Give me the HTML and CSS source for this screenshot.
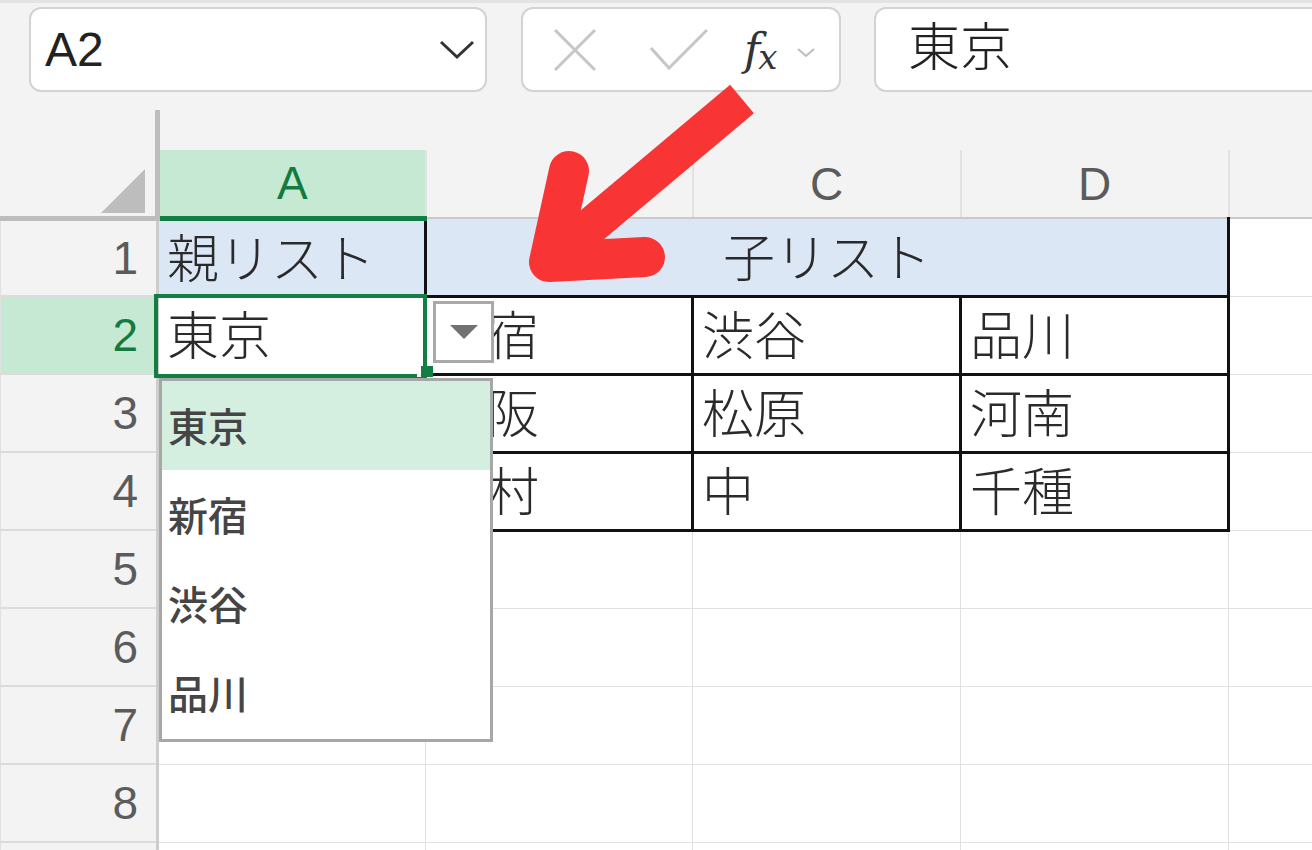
FILE: index.html
```html
<!DOCTYPE html>
<html lang="ja">
<head>
    <meta charset="UTF-8">
    <title>入力規則 - ドロップダウンリスト</title>
    <link rel="stylesheet" href="styles.css">
</head>
<body>
    <!-- Formula bar -->
    <div class="toolbar">
        <div class="name-box">
            <span class="name-text">A2</span>
            <svg class="name-chevron" width="36" height="20" viewBox="0 0 36 20">
                <path d="M2 2 L18 17 L34 2" fill="none" stroke="#333" stroke-width="3"/>
            </svg>
        </div>
        <div class="fx-buttons">
            <svg class="btn-cancel" width="44" height="44" viewBox="0 0 44 44">
                <path d="M2 2 L42 42 M42 2 L2 42" stroke="#c6c6c6" stroke-width="3"/>
            </svg>
            <svg class="btn-enter" width="58" height="44" viewBox="0 0 58 44">
                <path d="M1 20 L19 40 L57 2" fill="none" stroke="#c6c6c6" stroke-width="3"/>
            </svg>
            <span class="fx"><i>f</i><i class="fx-x">x</i></span>
            <svg class="fx-chevron" width="18" height="10" viewBox="0 0 18 10">
                <path d="M1 1 L9 8 L17 1" fill="none" stroke="#bdbdbd" stroke-width="2"/>
            </svg>
        </div>
        <div class="formula-input">東京</div>
    </div>

    <!-- Sheet grid -->
    <table class="sheet">
        <colgroup>
            <col class="c-rh">
            <col class="c-a">
            <col class="c-b">
            <col class="c-c">
            <col class="c-d">
            <col class="c-e">
        </colgroup>
        <tr class="gap-row">
            <td class="corner" rowspan="2">
                <svg width="44" height="44" viewBox="0 0 44 44"><path d="M44 0 L44 44 L0 44 Z" fill="#bdbdbd"/></svg>
            </td>
            <td class="gap" colspan="5"></td>
        </tr>
        <tr class="col-heads">
            <th class="active">A</th>
            <th></th>
            <th>C</th>
            <th>D</th>
            <th></th>
        </tr>
        <tr>
            <td class="rh">1</td>
            <td class="blue">親リスト</td>
            <td class="blue merged" colspan="3">子リスト</td>
            <td></td>
        </tr>
        <tr>
            <td class="rh active">2</td>
            <td class="active-cell">東京
                <div class="selection"></div>
                <div class="fill-handle"></div>
                <div class="dd-button"><span class="dd-caret"></span></div>
                <ul class="dd-list">
                    <li class="hover">東京</li>
                    <li>新宿</li>
                    <li>渋谷</li>
                    <li>品川</li>
                </ul>
            </td>
            <td class="boxed">新宿</td>
            <td class="boxed">渋谷</td>
            <td class="boxed">品川</td>
            <td></td>
        </tr>
        <tr>
            <td class="rh">3</td>
            <td>大阪</td>
            <td class="boxed">大阪</td>
            <td class="boxed">松原</td>
            <td class="boxed">河南</td>
            <td></td>
        </tr>
        <tr>
            <td class="rh">4</td>
            <td>名古屋</td>
            <td class="boxed">中村</td>
            <td class="boxed">中</td>
            <td class="boxed">千種</td>
            <td></td>
        </tr>
        <tr><td class="rh">5</td><td></td><td></td><td></td><td></td><td></td></tr>
        <tr><td class="rh">6</td><td></td><td></td><td></td><td></td><td></td></tr>
        <tr><td class="rh">7</td><td></td><td></td><td></td><td></td><td></td></tr>
        <tr><td class="rh">8</td><td></td><td></td><td></td><td></td><td></td></tr>
        <tr><td class="rh"></td><td></td><td></td><td></td><td></td><td></td></tr>
    </table>

    <!-- Annotation arrow -->
    <svg class="arrow" width="1312" height="850" viewBox="0 0 1312 850">
        <path d="M742 99 L560 252" stroke="#f93434" stroke-width="37" fill="none"/>
        <path d="M569 171 L549 262 L645 257" stroke="#f93434" stroke-width="40" fill="none"
              stroke-linecap="round" stroke-linejoin="round"/>
    </svg>
</body>
</html>
```

FILE: styles.css
```css
* {
    margin: 0;
    padding: 0;
    box-sizing: border-box;
}

body {
    position: relative;
    width: 1312px;
    height: 850px;
    overflow: hidden;
    background-color: #f3f3f3;
    font-family: "Liberation Sans", Arial, sans-serif;
}

/* Formula bar */
.toolbar {
    display: flex;
    align-items: flex-start;
    height: 110px;
    padding: 4px 0 0 29px;
    border-top: 3px solid #e3e3e3;
    overflow: hidden;
}

.name-box,
.fx-buttons,
.formula-input {
    height: 85px;
    background-color: #fff;
    border: 2px solid #d3d3d3;
    border-radius: 12px;
    display: flex;
    align-items: center;
}

.name-box {
    flex: 0 0 458px;
    justify-content: space-between;
    padding: 0 10px 0 14px;
}

.name-text {
    font-size: 48px;
    color: #222;
}

.fx-buttons {
    flex: 0 0 320px;
    margin-left: 34px;
    padding-left: 30px;
}

.btn-enter {
    margin-left: 53px;
}

.fx {
    margin-left: 36px;
    font-family: "DejaVu Serif", "Liberation Serif", serif;
    font-size: 44px;
    color: #333;
    line-height: 1;
}

.fx-x {
    font-size: 34px;
    margin-left: -2px;
    position: relative;
    top: 4px;
}

.fx-chevron {
    margin-left: 20px;
    margin-top: 6px;
}

.formula-input {
    flex: 0 0 460px;
    margin-left: 33px;
    padding: 0 0 12px 32px;
    font-family: "Noto Sans CJK JP", sans-serif;
    font-weight: 300;
    font-size: 52px;
    color: #222;
}

/* Grid */
.sheet {
    border-collapse: collapse;
    table-layout: fixed;
    width: 1312px;
}

.c-rh { width: 157px; }
.c-a { width: 268px; }
.c-b { width: 267px; }
.c-c { width: 268px; }
.c-d { width: 268px; }
.c-e { width: 84px; }

.sheet tr {
    height: 78px;
}

.sheet tr.gap-row {
    height: 40px;
}

.sheet tr.col-heads {
    height: 68px;
}

.sheet td {
    background-color: #fff;
    border: 1px solid #e0e0e0;
    padding: 0 0 4px 8px;
    font-family: "Noto Sans CJK JP", sans-serif;
    font-weight: 300;
    font-size: 52px;
    line-height: 60px;
    color: #2a2a2a;
    white-space: nowrap;
}

.sheet td.gap {
    background-color: #f3f3f3;
    border: none;
}

.sheet td.corner {
    background-color: #f3f3f3;
    border: none;
    border-right: 5px solid #bdbdbd;
    border-bottom: 5px solid #bdbdbd;
    vertical-align: bottom;
    text-align: right;
    padding: 0 10px 3px 0;
    line-height: 0;
}

.col-heads th {
    background-color: #f3f3f3;
    font-weight: normal;
    font-size: 46px;
    color: #5b5b5b;
    border-right: 2px solid #e2e2e2;
    border-bottom: 2px solid #c9c9c9;
}

.col-heads th.active {
    background-color: #c6e9d4;
    color: #137a40;
    border-bottom: 5px solid #137e43;
}

.sheet td.rh {
    background-color: #f3f3f3;
    border-right: 3px solid #cdcdcd;
    border-bottom: 2px solid #dcdcdc;
    text-align: right;
    padding: 0 18px 0 0;
    font-family: "Liberation Sans", Arial, sans-serif;
    font-weight: normal;
    font-size: 46px;
    line-height: 52px;
    color: #5b5b5b;
}

.sheet td.rh.active {
    background-color: #c6e9d4;
    color: #137a40;
}

.sheet td.blue {
    background-color: #dce7f6;
}

.sheet td.merged {
    text-align: center;
    padding-left: 0;
    border-left: 3px solid #111;
    border-right: 3px solid #111;
    border-bottom: 3px solid #111;
}

.sheet td.boxed {
    border: 3px solid #111;
}

/* Active cell with list */
.sheet td.active-cell {
    position: relative;
}

.selection {
    position: absolute;
    top: -3px;
    left: -5px;
    right: -3px;
    bottom: -4px;
    border: 4px solid #137e43;
}

.fill-handle {
    position: absolute;
    right: -9px;
    bottom: -3px;
    width: 16px;
    height: 11px;
    background-color: #137e43;
    border-left: 4px solid #fff;
}

.dd-button {
    position: absolute;
    left: 274px;
    top: 4px;
    width: 61px;
    height: 62px;
    background-color: #fff;
    border: 3px solid #a9a9a9;
    display: flex;
    align-items: center;
    justify-content: center;
}

.dd-caret {
    width: 0;
    height: 0;
    border-left: 14px solid transparent;
    border-right: 14px solid transparent;
    border-top: 14px solid #717171;
}

.dd-list {
    position: absolute;
    left: 0;
    top: 81px;
    width: 334px;
    height: 364px;
    list-style: none;
    background-color: #fff;
    border: 3px solid #a7a7a7;
}

.dd-list li {
    height: 89px;
    display: flex;
    align-items: center;
    padding-left: 6px;
    font-size: 40px;
    font-weight: 500;
    color: #454545;
}

.dd-list li.hover {
    background-color: #d4eedf;
}

/* Annotation */
.arrow {
    position: absolute;
    top: 0;
    left: 0;
    pointer-events: none;
}
```
